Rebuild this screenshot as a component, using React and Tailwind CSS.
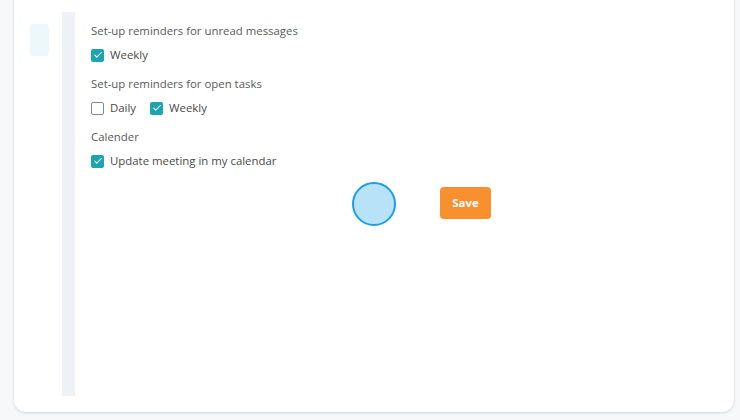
import { Check } from 'lucide-react';

const CheckBox = ({ checked, label }) => (
  <label className="flex items-center gap-[6px] h-[18px]">
    {checked ? (
      <span className="flex h-[13px] w-[13px] items-center justify-center rounded-[2px] bg-[#1ea4ae]">
        <Check className="h-[10px] w-[10px] text-white" strokeWidth={2.5} />
      </span>
    ) : (
      <span className="h-[13px] w-[13px] rounded-[2px] border border-[#8a8a8a] bg-white" />
    )}
    <span className="text-[11.4px] text-[#4a4a4a]">{label}</span>
  </label>
);

const Section = ({ title, children, className = '' }) => (
  <div className={className}>
    <div className="h-[18px] text-[11.4px] leading-[18px] text-[#5a5a5a]">{title}</div>
    <div className="mt-[6px] flex items-center gap-[14px]">{children}</div>
  </div>
);

const App = () => {
  return (
    <div className="h-[420px] w-[740px] overflow-hidden bg-[#f7f8fa] pt-px font-['Open_Sans',sans-serif]">
      <div className="relative ml-[14px] -mt-[17px] flex h-[428px] w-[720px] rounded-[12px] bg-white pt-[28px] shadow-[0_1px_3px_rgba(0,0,0,0.15)]">
        {/* sidebar tab */}
        <div className="ml-[16px] mt-[12px] h-[32px] w-[19px] rounded-[3px] bg-[#ecf8fa]" />

        {/* divider strip */}
        <div className="ml-[13px] h-[384px] w-[13px] bg-[#eef2f6]" />

        <div className="ml-[16px] flex-1 pt-[10px]">
          <Section title="Set-up reminders for unread messages">
            <CheckBox checked label="Weekly" />
          </Section>
          <Section title="Set-up reminders for open tasks" className="mt-[11px]">
            <CheckBox label="Daily" />
            <CheckBox checked label="Weekly" />
          </Section>
          <Section title="Calender" className="mt-[11px]">
            <CheckBox checked label="Update meeting in my calendar" />
          </Section>

          <div className="mt-[17px] flex pl-[349px]">
            <button className="h-[32px] w-[51px] rounded-[4px] bg-[#f8902f] text-[11.4px] font-bold text-white">
              Save
            </button>
          </div>
        </div>

        {/* click indicator */}
        <div className="absolute left-[338px] top-[198px] h-[44px] w-[44px] rounded-full border-2 border-[#1a9fe6] bg-[#b8e2f8]" />
      </div>
    </div>
  );
};

export default App;
